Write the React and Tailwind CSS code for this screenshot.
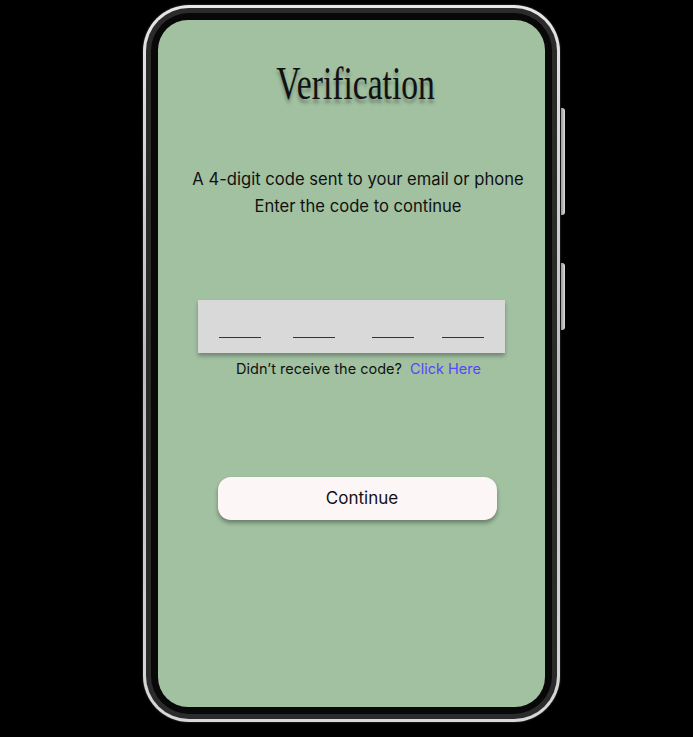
import React from 'react';

export default function App() {
  return (
    <div className="w-[693px] h-[737px] bg-black overflow-hidden">
      <div className="relative ml-[143px] pt-[5px] w-[417px]">
        {/* side buttons */}
        <div className="absolute right-[-5px] top-[108px] w-[4px] h-[107px] rounded-r-[3px] bg-gradient-to-r from-[#9a9a9a] to-[#dcdcdc]" />
        <div className="absolute right-[-5px] top-[263px] w-[4px] h-[67px] rounded-r-[3px] bg-gradient-to-r from-[#9a9a9a] to-[#dcdcdc]" />

        <div className="rounded-[46px] bg-gradient-to-b from-[#e6e6e6] via-[#bdbdbd] to-[#d8d8d8] p-[3px] shadow-[0_0_2px_rgba(255,255,255,0.3)]">
          <div className="rounded-[43px] bg-[#2b2b2b] p-[5px]">
            <div className="rounded-[38px] bg-[#080808] p-[7px]">
              <div className="h-[687px] rounded-[30px] bg-[#a1c1a1] flex flex-col font-['Inter',sans-serif] text-[#111]">
                <h1 className="mt-[37px] pl-[8px] text-center font-['Liberation_Serif',serif] text-[46px] leading-[54px] text-[#111] [text-shadow:0_4px_4px_rgba(0,0,0,0.3)]">
                  <span className="inline-block scale-x-[0.73]">Verification</span>
                </h1>
                <div className="mt-[55px] pl-[13px] text-center text-[16.6px] leading-[27px]">
                  <p>A 4-digit code sent to your email or phone</p>
                  <p>Enter the code to continue</p>
                </div>
                <div className="mt-[80px] mx-auto w-[307px] h-[53px] bg-[#d9d9d9] shadow-[0_3px_4px_rgba(0,0,0,0.3)] flex items-end pb-[15px] pl-[21px]">
                  <div className="w-[42px] h-[1.5px] bg-[#333]" />
                  <div className="ml-[32px] w-[42px] h-[1.5px] bg-[#333]" />
                  <div className="ml-[37px] w-[42px] h-[1.5px] bg-[#333]" />
                  <div className="ml-[28px] w-[42px] h-[1.5px] bg-[#333]" />
                </div>
                <p className="mt-[6px] pl-[14px] text-center text-[14.5px] leading-[20px]">
                  Didn’t receive the code?&nbsp; <span className="text-[#5546ff]">Click Here</span>
                </p>
                <button className="mt-[98px] ml-[60px] w-[279px] h-[43px] pl-[9px] rounded-[13px] bg-[#fdf6f6] text-[17px] text-[#111] shadow-[0_3px_4px_rgba(0,0,0,0.35)]">
                  Continue
                </button>
              </div>
            </div>
          </div>
        </div>
      </div>
    </div>
  );
}
